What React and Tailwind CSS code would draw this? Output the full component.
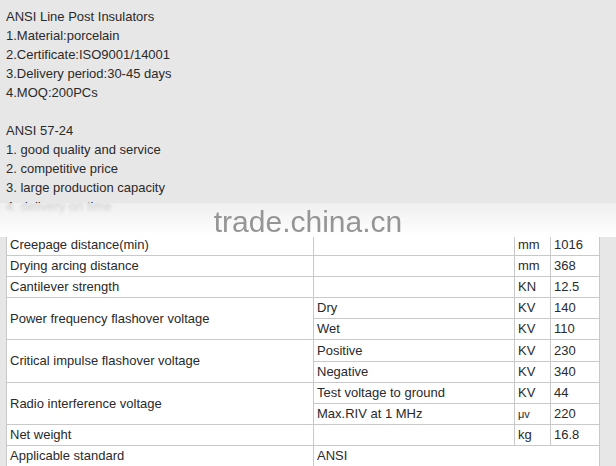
const INTRO = [
  "ANSI Line Post Insulators",
  "1.Material:porcelain",
  "2.Certificate:ISO9001/14001",
  "3.Delivery period:30-45 days",
  "4.MOQ:200PCs",
  "",
  "ANSI 57-24",
  "1. good quality and service",
  "2. competitive price",
  "3. large production capacity",
  "4. delivery on time",
];

const cell = "border border-[#c9c9c9] px-[3px] py-0 align-middle whitespace-nowrap";

function Row({ label, sub, unit, value, span, h = "h-[21px]" }) {
  return (
    <tr className={h}>
      {label && <td rowSpan={span} className={cell}>{label}</td>}
      <td className={cell}>{sub}</td>
      <td className={cell}>{unit}</td>
      <td className={cell}>{value}</td>
    </tr>
  );
}

export default function App() {
  return (
    <div className="relative w-[616px] h-[466px] overflow-hidden bg-[#e7e7e7] text-[13px] leading-[19px] text-[#2a2a2a] font-['Liberation_Sans',Arial,sans-serif]">
      <div className="h-[234px] pt-[7px] pl-[6px] overflow-hidden">
        {INTRO.map((t, i) => (
          <div key={i} className="h-[19px]">{t}</div>
        ))}
      </div>

      <table className="ml-[6px] w-[593px] table-fixed border-collapse bg-white leading-[20px]">
        <colgroup>
          <col className="w-[307px]" />
          <col className="w-[201px]" />
          <col className="w-[36px]" />
          <col className="w-[49px]" />
        </colgroup>
        <tbody>
          <Row label="Creepage distance(min)" unit="mm" value="1016" />
          <Row label="Drying arcing distance" unit="mm" value="368" />
          <Row label="Cantilever strength" unit="KN" value="12.5" />
          <Row label="Power frequency flashover voltage" span={2} sub="Dry" unit="KV" value="140" />
          <Row sub="Wet" unit="KV" value="110" h="h-[20px]" />
          <Row label="Critical impulse flashover voltage" span={2} sub="Positive" unit="KV" value="230" h="h-[22px]" />
          <Row sub="Negative" unit="KV" value="340" />
          <Row label="Radio interference voltage" span={2} sub="Test voltage to ground" unit="KV" value="44" />
          <Row sub="Max.RIV at 1 MHz" unit={<span className="text-[11px]">μv</span>} value="220" />
          <Row label="Net weight" unit="kg" value="16.8" />
          <tr className="h-[21px]">
            <td className={cell}>Applicable standard</td>
            <td colSpan={3} className={cell}>ANSI</td>
          </tr>
        </tbody>
      </table>

      {/* watermark band */}
      <div className="absolute left-0 top-[203px] w-full h-[34px] backdrop-blur-[1.5px] bg-gradient-to-b from-[#f1f1f1]/80 to-white flex items-end justify-center">
        <span className="text-[30px] leading-[31px] text-[#959595] font-['Liberation_Sans',Arial,sans-serif]">trade.china.cn</span>
      </div>
    </div>
  );
}
